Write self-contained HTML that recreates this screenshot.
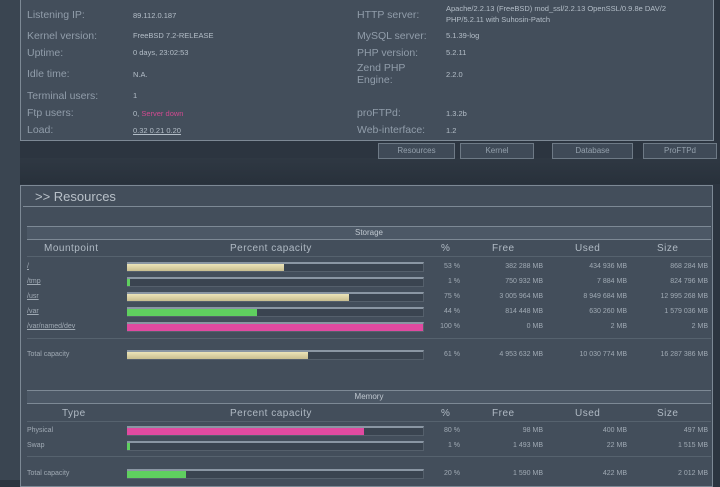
<!DOCTYPE html><html><head><style>
body{margin:0;width:720px;height:480px;overflow:hidden;background:#2c3540;font-family:"Liberation Sans",sans-serif;position:relative}
.a{position:absolute;white-space:nowrap}
.l{color:#919daa;font-size:10.5px}
.v{color:#b4bec8;font-size:7.5px}
.bar{position:absolute;left:127px;width:296px;height:7px;border-top:2px solid #8a96a3;background:#3a4450;border-bottom:1px solid #55606c;border-right:1px solid #55606c}
.bar i{display:block;height:7px}
.y{background:linear-gradient(#ece4b8,#c8be90)}
.g{background:#5fcf5f}
.p{background:#e04aa0}
.c{font-size:7px;color:#a0aab4;text-align:right}
.h{font-size:10px;color:#b0bac4;letter-spacing:.5px}
.tab{position:absolute;top:143px;height:14px;border:1px solid #6e7a86;background:#3f4a57;color:#94a0ac;font-size:8px;text-align:center;line-height:14px}
</style></head><body>
<div class="a" style="left:0;top:0;width:20px;height:480px;background:#3a4551"></div>
<div class="a" style="left:20px;top:0;width:692px;height:140px;background:#434e5b;border:1px solid #7d8995;border-top:none"></div>
<div class="a" style="left:20px;top:158px;width:700px;height:26px;background:linear-gradient(#2f3843,#28313b)"></div>
<div class="l a" style="left:27px;top:9px">Listening IP:</div><div class="v a" style="left:133px;top:11px">89.112.0.187</div>
<div class="l a" style="left:27px;top:30px">Kernel version:</div><div class="v a" style="left:133px;top:31px">FreeBSD 7.2-RELEASE</div>
<div class="l a" style="left:27px;top:47px">Uptime:</div><div class="v a" style="left:133px;top:48px">0 days, 23:02:53</div>
<div class="l a" style="left:27px;top:68px">Idle time:</div><div class="v a" style="left:133px;top:70px">N.A.</div>
<div class="l a" style="left:27px;top:90px">Terminal users:</div><div class="v a" style="left:133px;top:91px">1</div>
<div class="l a" style="left:27px;top:107px">Ftp users:</div><div class="v a" style="left:133px;top:109px">0, <span style="color:#d04a90">Server down</span></div>
<div class="l a" style="left:27px;top:124px">Load:</div><div class="v a" style="left:133px;top:126px;text-decoration:underline">0.32 0.21 0.20</div>
<div class="l a" style="left:357px;top:9px">HTTP server:</div><div class="v a" style="left:446px;top:3px;line-height:11px">Apache/2.2.13 (FreeBSD) mod_ssl/2.2.13 OpenSSL/0.9.8e DAV/2<br>PHP/5.2.11 with Suhosin-Patch</div>
<div class="l a" style="left:357px;top:30px">MySQL server:</div><div class="v a" style="left:446px;top:31px">5.1.39-log</div>
<div class="l a" style="left:357px;top:47px">PHP version:</div><div class="v a" style="left:446px;top:48px">5.2.11</div>
<div class="l a" style="left:357px;top:62px;line-height:12px">Zend PHP<br>Engine:</div><div class="v a" style="left:446px;top:70px">2.2.0</div>
<div class="l a" style="left:357px;top:107px">proFTPd:</div><div class="v a" style="left:446px;top:109px">1.3.2b</div>
<div class="l a" style="left:357px;top:124px">Web-interface:</div><div class="v a" style="left:446px;top:126px">1.2</div>
<div class="tab" style="left:378px;width:75px">Resources</div>
<div class="tab" style="left:460px;width:72px">Kernel</div>
<div class="tab" style="left:552px;width:79px">Database</div>
<div class="tab" style="left:643px;width:72px">ProFTPd</div>
<div class="a" style="left:20px;top:185px;width:691px;height:300px;background:#434e5b;border:1px solid #7d8995"></div>
<div class="a" style="left:23px;top:186px;width:688px;height:20px;border-bottom:1px solid #7d8995"></div>
<div class="a" style="left:35px;top:189px;font-size:13px;color:#b8c0c8">&gt;&gt; Resources</div>
<div class="a" style="left:27px;top:226px;width:684px;height:12px;background:#4c5866;border-top:1px solid #7d8995;border-bottom:1px solid #7d8995;font-size:8px;color:#c0c8d0;text-align:center;line-height:12px">Storage</div>
<div class="h a" style="left:44px;top:243px">Mountpoint</div><div class="h a" style="left:230px;top:243px">Percent capacity</div>
<div class="h a" style="left:441px;top:243px">%</div><div class="h a" style="left:492px;top:243px">Free</div><div class="h a" style="left:575px;top:243px">Used</div><div class="h a" style="left:657px;top:243px">Size</div>
<div class="a" style="left:27px;top:256px;width:684px;height:1px;background:#56626e"></div>
<div class="a" style="left:27px;top:338px;width:684px;height:1px;background:#56626e"></div>
<div class="a" style="left:27px;top:456px;width:684px;height:1px;background:#56626e"></div>
<div class="a" style="left:27px;top:390px;width:684px;height:12px;background:#4c5866;border-top:1px solid #7d8995;border-bottom:1px solid #7d8995;font-size:8px;color:#c0c8d0;text-align:center;line-height:12px">Memory</div>
<div class="h a" style="left:62px;top:408px">Type</div><div class="h a" style="left:230px;top:408px">Percent capacity</div>
<div class="h a" style="left:441px;top:408px">%</div><div class="h a" style="left:492px;top:408px">Free</div><div class="h a" style="left:575px;top:408px">Used</div><div class="h a" style="left:657px;top:408px">Size</div>
<div class="a" style="left:27px;top:421px;width:684px;height:1px;background:#56626e"></div>
<div id="rows"></div>
<script>
var R=[[262,"/","y",53,"53 %","382 288 MB","434 936 MB","868 284 MB",1],[277,"/tmp","g",1,"1 %","750 932 MB","7 884 MB","824 796 MB",1],[292,"/usr","y",75,"75 %","3 005 964 MB","8 949 684 MB","12 995 268 MB",1],[307,"/var","g",44,"44 %","814 448 MB","630 260 MB","1 579 036 MB",1],[322,"/var/named/dev","p",100,"100 %","0 MB","2 MB","2 MB",1],[350,"Total capacity","y",61,"61 %","4 953 632 MB","10 030 774 MB","16 287 386 MB",0],[426,"Physical","p",80,"80 %","98 MB","400 MB","497 MB",0],[441,"Swap","g",1,"1 %","1 493 MB","22 MB","1 515 MB",0],[469,"Total capacity","g",20,"20 %","1 590 MB","422 MB","2 012 MB",0]];
var h="";R.forEach(function(r){var t=r[0];
h+='<div class="a" style="left:27px;top:'+(t+1)+'px;font-size:7px;color:#a0aab4;'+(r[8]?'text-decoration:underline':'')+'">'+r[1]+'</div>';
h+='<div class="bar" style="top:'+t+'px"><i class="'+r[2]+'" style="width:'+(r[3]*2.96)+'px"></i></div>';
[[420,40,r[4]],[470,73,r[5]],[550,77,r[6]],[630,78,r[7]]].forEach(function(c){h+='<div class="a c" style="left:'+c[0]+'px;width:'+c[1]+'px;top:'+(t+1)+'px">'+c[2]+'</div>'});});
document.getElementById("rows").innerHTML=h;
</script>
</body></html>
